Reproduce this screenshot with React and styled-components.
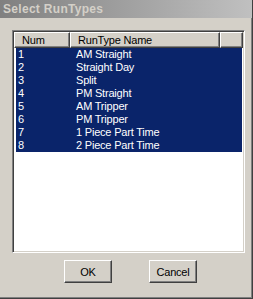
import React from 'react';
import styled, { createGlobalStyle } from 'styled-components';

const GlobalStyle = createGlobalStyle`
  html, body {
    margin: 0;
    padding: 0;
    background: #d4d0c8;
  }
  body {
    font-family: "Liberation Sans", Arial, sans-serif;
    font-size: 11px;
  }
`;

const Window = styled.div`
  width: 253px;
  height: 299px;
  box-sizing: border-box;
  background: #d4d0c8;
  border-right: 1px solid #404040;
  border-bottom: 1px solid #404040;
  box-shadow: inset -1px -1px 0 #808080;
  display: flex;
  flex-direction: column;
`;

const TitleBar = styled.div`
  height: 18px;
  flex: none;
  background: linear-gradient(to right, #808080, #c0c0c0);
  color: #d4d0c8;
  font-weight: bold;
  font-size: 12px;
  line-height: 18px;
  padding-left: 3px;
  letter-spacing: 0.3px;
  white-space: nowrap;
`;

const Body = styled.div`
  flex: 1;
  display: flex;
  flex-direction: column;
  padding: 12px 6px 0 12px;
`;

const ListBox = styled.div`
  width: 233px;
  height: 223px;
  box-sizing: border-box;
  background: #fff;
  border-top: 1px solid #808080;
  border-left: 1px solid #808080;
  border-right: 1px solid #fff;
  border-bottom: 1px solid #fff;
  box-shadow: inset 1px 1px 0 #404040, inset -1px -1px 0 #d4d0c8;
  padding: 1px;
  display: flex;
  flex-direction: column;
  overflow: hidden;
`;

const HeaderRow = styled.div`
  display: flex;
  height: 16px;
  flex: none;
`;

const HeaderCell = styled.div`
  width: ${p => (p.$w ? `${p.$w}px` : 'auto')};
  flex: ${p => (p.$w ? 'none' : '1')};
  box-sizing: border-box;
  background: #d4d0c8;
  border-top: 1px solid #fff;
  border-left: 1px solid #fff;
  border-bottom: 1px solid #404040;
  border-right: 1px solid #404040;
  box-shadow: inset -1px -1px 0 #808080;
  padding-left: 7px;
  line-height: 14px;
  color: #000;
  white-space: nowrap;
  letter-spacing: -0.2px;
`;

const Row = styled.div`
  display: flex;
  height: 13px;
  margin: 0 1px 0 2px;
  background: ${p => (p.$selected ? '#0a246a' : 'transparent')};
  color: ${p => (p.$selected ? '#fff' : '#000')};
  line-height: 13px;
  letter-spacing: -0.2px;
  white-space: nowrap;
`;

const Cell = styled.div`
  width: ${p => (p.$w ? `${p.$w}px` : 'auto')};
  flex: ${p => (p.$w ? 'none' : '1')};
  box-sizing: border-box;
  padding-left: ${p => p.$pad}px;
`;

const ButtonRow = styled.div`
  display: flex;
  gap: 37px;
  padding-left: 52px;
  margin-top: 7px;
`;

const Button = styled.button`
  width: 48px;
  height: 23px;
  box-sizing: border-box;
  background: #d4d0c8;
  font-family: "Liberation Sans", Arial, sans-serif;
  font-size: 11px;
  color: #000;
  border-top: 1px solid #fff;
  border-left: 1px solid #fff;
  border-right: 1px solid #404040;
  border-bottom: 1px solid #404040;
  box-shadow: inset -1px -1px 0 #808080;
  padding: 0;
  letter-spacing: -0.2px;
`;

const runTypes = [
  'AM Straight',
  'Straight Day',
  'Split',
  'PM Straight',
  'AM Tripper',
  'PM Tripper',
  '1 Piece Part Time',
  '2 Piece Part Time',
];

export default function App() {
  return (
    <>
      <GlobalStyle />
      <Window>
        <TitleBar>Select RunTypes</TitleBar>
        <Body>
          <ListBox>
            <HeaderRow>
              <HeaderCell $w={56}>Num</HeaderCell>
              <HeaderCell $w={150}>RunType Name</HeaderCell>
              <HeaderCell />
            </HeaderRow>
            {runTypes.map((name, i) => (
              <Row key={name} $selected>
                <Cell $w={53} $pad={2}>{i + 1}</Cell>
                <Cell $w={150} $pad={7}>{name}</Cell>
                <Cell />
              </Row>
            ))}
          </ListBox>
          <ButtonRow>
            <Button>OK</Button>
            <Button>Cancel</Button>
          </ButtonRow>
        </Body>
      </Window>
    </>
  );
}
